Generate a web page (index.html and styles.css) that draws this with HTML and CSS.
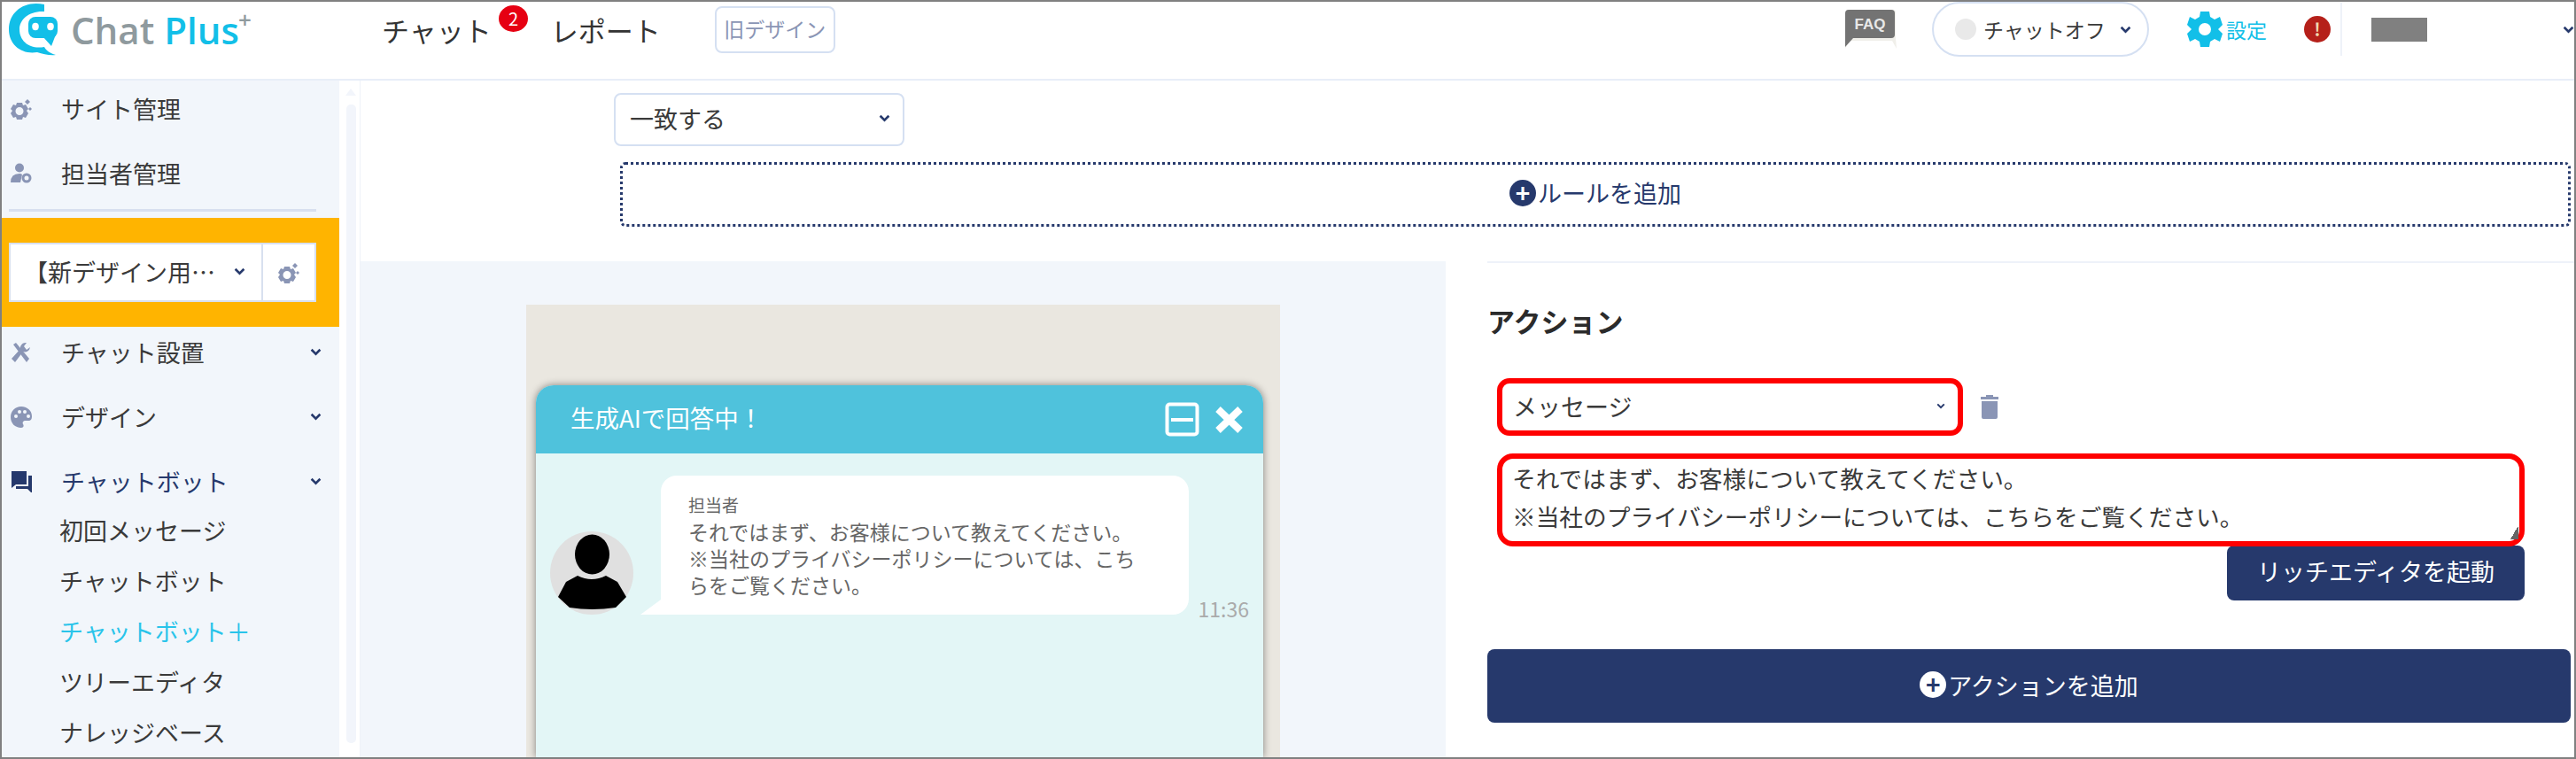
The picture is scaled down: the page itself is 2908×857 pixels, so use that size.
FILE: index.html
```html
<!DOCTYPE html>
<html lang="ja">
<head>
    <meta charset="UTF-8">
    <title>Chat Plus</title>
    <link rel="stylesheet" href="styles.css">
</head>
<body>
<div class="frame">
    <header class="topbar">
        <a class="logo">
            <svg class="logo-mark" viewBox="10 4 56 60">
                <path fill="#12bfe8" d="M50 6 C28 1 10 14 10 34 C10 52 25 63 42 60 C49 62 56 64 63 63 C56 61 52 58 50 54 C34 57 22 48 22 34 C22 23 33 13 50 14 Z"/>
                <rect x="32" y="20" width="33" height="24" rx="8" fill="#12bfe8"/>
                <path d="M48 42 L58 53 L63 40 Z" fill="#12bfe8"/>
                <ellipse cx="40" cy="31" rx="3.8" ry="4.2" fill="#fff"/>
                <ellipse cx="57" cy="31" rx="3.8" ry="4.2" fill="#fff"/>
            </svg>
            <span class="logo-chat">Chat</span>
            <span class="logo-plus">Plus<sup>+</sup></span>
        </a>
        <nav class="topnav">
            <a class="topnav-item">チャット<span class="badge">2</span></a>
            <a class="topnav-item">レポート</a>
        </nav>
        <a class="old-design">旧デザイン</a>

        <div class="top-right">
            <svg class="faq" viewBox="0 0 58 44">
                <path d="M4 0 H54 Q57 0 57 3 V32 L58 44 L53 35 H5 L0 44 L1 32 V3 Q1 0 4 0 Z" fill="#f0efea"/>
                <path d="M4 0 H52 Q56 0 56 4 V28 Q56 32 52 32 H9 L0 42 V4 Q0 0 4 0 Z" fill="#737373"/>
                <text x="28" y="22" text-anchor="middle" class="faq-text">FAQ</text>
            </svg>
            <div class="status-pill">
                <span class="status-dot"></span>
                <span>チャットオフ</span>
                <svg class="chev" viewBox="0 0 12 8"><path d="M1.5 1.5 L6 6 L10.5 1.5" /></svg>
            </div>
            <a class="settings">
                <svg class="settings-gear" viewBox="0 0 40 40">
                    <path fill="#12bfe8" fill-rule="evenodd" d="M15 0 H25 L26 6 L31 9 L37 6 L40 15 L35 20 L40 25 L37 34 L31 31 L26 34 L25 40 H15 L14 34 L9 31 L3 34 L0 25 L5 20 L0 15 L3 6 L9 9 L14 6 Z M20 13 A7 7 0 1 0 20 27 A7 7 0 1 0 20 13 Z"/>
                </svg>
                <span>設定</span>
            </a>
            <span class="alert">!</span>
            <span class="top-divider"></span>
            <span class="user-block"></span>
            <svg class="chev user-chev" viewBox="0 0 12 8"><path d="M1.5 1.5 L6 6 L10.5 1.5" /></svg>
        </div>
    </header>

    <div class="main">
        <aside class="sidebar">
            <a class="side-item">
                <svg class="side-icon" viewBox="0 0 24 24"><use href="#gears"/></svg>
                <span>サイト管理</span>
            </a>
            <a class="side-item side-item-second">
                <svg class="side-icon" viewBox="0 0 24 24">
                    <circle cx="10" cy="5.5" r="5" fill="#8a95b5"/>
                    <path d="M0 22 Q0 12 10 12 Q12 12 13 13 L11 22 Z" fill="#8a95b5"/>
                    <circle cx="18" cy="17" r="4" fill="none" stroke="#8a95b5" stroke-width="3"/>
                </svg>
                <span>担当者管理</span>
            </a>
            <div class="side-divider"></div>
            <div class="site-box">
                <div class="site-select">
                    <span class="site-name">【新デザイン用…</span>
                    <svg class="chev" viewBox="0 0 12 8"><path d="M1.5 1.5 L6 6 L10.5 1.5" /></svg>
                </div>
                <div class="site-gear">
                    <svg class="side-icon" viewBox="0 0 24 24"><use href="#gears"/></svg>
                </div>
            </div>
            <a class="side-item side-group">
                <svg class="side-icon" viewBox="0 0 24 24">
                    <path d="M3 3 L6 1 L21 19 L18 23 Z" fill="#8a95b5"/>
                    <path d="M22 6 A6 6 0 0 1 14 11 L5 23 L1 19 L11 8 A6 6 0 0 1 18 1 L15 5 L18 9 Z" fill="#8a95b5"/>
                </svg>
                <span>チャット設置</span>
                <svg class="chev side-chev" viewBox="0 0 12 8"><path d="M1.5 1.5 L6 6 L10.5 1.5" /></svg>
            </a>
            <a class="side-item side-group">
                <svg class="side-icon" viewBox="0 0 24 24">
                    <path fill="#8a95b5" d="M12 0 C5 0 0 5 0 12 C0 19 5 24 12 24 C15 24 15 21 14 20 C13 18 14 16 17 16 H20 C23 16 24 14 24 11 C24 4 18 0 12 0 Z"/>
                    <circle cx="6" cy="11" r="2" fill="#f2f6fb"/>
                    <circle cx="10" cy="6" r="2" fill="#f2f6fb"/>
                    <circle cx="16" cy="6" r="2" fill="#f2f6fb"/>
                    <circle cx="20" cy="11" r="2" fill="#f2f6fb"/>
                </svg>
                <span>デザイン</span>
                <svg class="chev side-chev" viewBox="0 0 12 8"><path d="M1.5 1.5 L6 6 L10.5 1.5" /></svg>
            </a>
            <a class="side-item side-group side-open">
                <svg class="side-icon" viewBox="0 0 24 24">
                    <path fill="#26396c" d="M1 0 H18 V15 H6 L1 19 Z"/>
                    <path fill="#26396c" d="M20 5 H24 V25 L19 20 H6 V17 H20 Z"/>
                </svg>
                <span>チャットボット</span>
                <svg class="chev side-chev" viewBox="0 0 12 8"><path d="M1.5 1.5 L6 6 L10.5 1.5" /></svg>
            </a>
            <a class="side-sub">初回メッセージ</a>
            <a class="side-sub">チャットボット</a>
            <a class="side-sub side-sub-active">チャットボット＋</a>
            <a class="side-sub">ツリーエディタ</a>
            <a class="side-sub">ナレッジベース</a>
        </aside>
        <div class="side-scroll">
            <span class="scroll-arrow"></span>
            <span class="scroll-thumb"></span>
        </div>

        <main class="content">
            <section class="rule-area">
                <div class="field match-select">
                    <span>一致する</span>
                    <svg class="chev" viewBox="0 0 12 8"><path d="M1.5 1.5 L6 6 L10.5 1.5" /></svg>
                </div>
                <a class="add-rule">
                    <span class="plus plus-navy">+</span>ルールを追加
                </a>
            </section>

            <section class="bottom-area">
                <div class="preview">
                    <div class="preview-bg">
                        <div class="widget">
                            <div class="widget-head">
                                <span class="widget-title">生成AIで回答中！</span>
                                <svg class="widget-min" viewBox="0 0 39 39">
                                    <rect x="2.5" y="2.5" width="34" height="34" rx="3" fill="none" stroke="#fff" stroke-width="4"/>
                                    <rect x="7" y="18" width="25" height="4" fill="#fff"/>
                                </svg>
                                <svg class="widget-close" viewBox="0 0 33 32">
                                    <path d="M4 4 L29 28 M29 4 L4 28" stroke="#fff" stroke-width="8" fill="none"/>
                                </svg>
                            </div>
                            <div class="widget-body">
                                <div class="msg">
                                    <svg class="avatar" viewBox="0 0 94 94">
                                        <circle cx="47" cy="47" r="47" fill="#e0e0e0"/>
                                        <ellipse cx="47.5" cy="26" rx="19.5" ry="22.5" fill="#000"/>
                                        <path d="M31 50 Q47 58 63 50 L76 57 L86 74 L74 86 Q47 90 22 86 L9 74 L18 57 Z" fill="#000"/>
                                    </svg>
                                    <div class="bubble">
                                        <div class="bubble-name">担当者</div>
                                        <div class="bubble-text">それではまず、お客様について教えてください。<br>※当社のプライバシーポリシーについては、こち<br>らをご覧ください。</div>
                                    </div>
                                    <span class="msg-time">11:36</span>
                                </div>
                            </div>
                        </div>
                    </div>
                </div>

                <div class="action-panel">
                    <div class="action-inner">
                        <h2 class="action-title">アクション</h2>
                        <div class="action-row">
                            <div class="field type-select">
                                <span>メッセージ</span>
                                <svg class="chev chev-small" viewBox="0 0 12 8"><path d="M1.5 1.5 L6 6 L10.5 1.5" /></svg>
                            </div>
                            <svg class="trash" viewBox="0 0 20 27">
                                <path d="M6 0 H14 V2 H20 V5 H0 V2 H6 Z M1 7 H19 V25 Q19 27 17 27 H3 Q1 27 1 25 Z" fill="#8a95b5"/>
                            </svg>
                        </div>
                        <div class="message-box">それではまず、お客様について教えてください。<br>※当社のプライバシーポリシーについては、こちらをご覧ください。</div>
                        <div class="editor-row">
                            <a class="btn-editor">リッチエディタを起動</a>
                        </div>
                        <a class="btn-add-action"><span class="plus plus-white">+</span>アクションを追加</a>
                    </div>
                </div>
            </section>
        </main>
    </div>
</div>

<svg class="defs" width="0" height="0">
    <defs>
        <g id="gears" fill="#8a95b5">
            <path fill-rule="evenodd" d="M7 5 H13 L14 8 L17 7 L20 12 L18 14 L20 17 L17 22 L14 21 L13 24 H7 L6 21 L3 22 L0 17 L2 14 L0 12 L3 7 L6 8 Z M10 10 A4.5 4.5 0 1 0 10 19 A4.5 4.5 0 1 0 10 10 Z"/>
            <path d="M19 1 L22 4 L19 7 L16 4 Z"/>
            <path d="M22 10 L24 12 L22 14 L20 12 Z"/>
        </g>
    </defs>
</svg>
</body>
</html>
```

FILE: styles.css
```css
* {
    box-sizing: border-box;
}
html, body {
    margin: 0;
    height: 100%;
    overflow: hidden;
}
body {
    font-family: "Noto Sans CJK JP", "Noto Sans", sans-serif;
    color: #3a3a3a;
    background: #fff;
}
a {
    color: inherit;
    text-decoration: none;
}
svg {
    display: block;
    flex: none;
}
.defs {
    position: absolute;
}

.frame {
    width: 2908px;
    height: 857px;
    border: 2px solid #808080;
    display: flex;
    flex-direction: column;
    overflow: hidden;
}

/* chevrons */
.chev {
    width: 13px;
    height: 9px;
    fill: none;
    stroke: #26396c;
    stroke-width: 2.4;
}
.chev-small {
    width: 10px;
    height: 7px;
}

/* top bar */
.topbar {
    flex: none;
    height: 89px;
    padding: 0 0 25px 8px;
    display: flex;
    align-items: center;
    border-bottom: 2px solid #e8eef8;
}
.logo {
    width: 421px;
    display: flex;
    align-items: center;
    font-family: "Open Sans", sans-serif;
    font-weight: 600;
    font-size: 42px;
    white-space: nowrap;
}
.logo-mark {
    width: 56px;
    height: 60px;
    margin-right: 14px;
}
.logo-chat {
    color: #8f9a9e;
    margin-right: 11px;
}
.logo-plus {
    color: #12bfe8;
}
.logo-plus sup {
    margin-left: -1px;
    color: #8f9a9e;
    font-size: 26px;
    line-height: 0;
    vertical-align: 18px;
}
.topnav {
    display: flex;
    gap: 67px;
    font-size: 31px;
}
.topnav-item {
    position: relative;
    color: #333;
}
.badge {
    position: absolute;
    left: 132px;
    top: -5px;
    width: 33px;
    height: 30px;
    border-radius: 50%;
    background: #e60012;
    color: #fff;
    font-size: 20px;
    line-height: 30px;
    text-align: center;
}
.old-design {
    margin-left: 61px;
    width: 136px;
    height: 53px;
    border: 2px solid #d5e0f2;
    border-radius: 8px;
    color: #8a95b5;
    font-size: 23px;
    line-height: 47px;
    text-align: center;
}
.top-right {
    margin-left: auto;
    display: flex;
    align-items: center;
}
.faq {
    width: 58px;
    height: 44px;
    margin-right: 40px;
}
.faq-text {
    font-family: "Liberation Sans", sans-serif;
    font-size: 17px;
    font-weight: bold;
    fill: #e8e8e8;
}
.status-pill {
    width: 245px;
    height: 62px;
    padding: 0 20px 0 24px;
    display: flex;
    align-items: center;
    gap: 8px;
    border: 2px solid #d5e0f2;
    border-radius: 31px;
    font-size: 23px;
    white-space: nowrap;
}
.status-pill .chev {
    margin-left: 8px;
}
.status-dot {
    flex: none;
    width: 24px;
    height: 24px;
    border-radius: 50%;
    background: #e9e9e9;
}
.settings {
    margin-left: 43px;
    display: flex;
    align-items: center;
    gap: 4px;
    color: #12bfe8;
    font-size: 23px;
}
.settings-gear {
    width: 40px;
    height: 40px;
}
.alert {
    margin-left: 42px;
    width: 30px;
    height: 30px;
    border-radius: 50%;
    background: #b5201a;
    color: #f0d8b0;
    font-size: 20px;
    font-weight: bold;
    line-height: 30px;
    text-align: center;
}
.top-divider {
    margin-left: 11px;
    width: 2px;
    height: 60px;
    background: #eef2f9;
}
.user-block {
    margin-left: 33px;
    width: 63px;
    height: 27px;
    background: #808080;
}
.user-chev {
    margin-left: 153px;
}

/* main layout */
.main {
    flex: 1;
    min-height: 0;
    display: flex;
}
.sidebar {
    flex: none;
    width: 381px;
    background: #f2f6fb;
    display: flex;
    flex-direction: column;
    overflow: hidden;
}
.side-item {
    flex: none;
    height: 66px;
    padding: 0 20px 3px 10px;
    display: flex;
    align-items: center;
    font-size: 27px;
    color: #3a3a3a;
    white-space: nowrap;
}
.side-item-second {
    margin-top: 7px;
}
.side-icon {
    width: 24px;
    height: 24px;
    margin-right: 33px;
}
.side-divider {
    flex: none;
    margin: 6px 26px 0 8px;
    height: 3px;
    background: #d8e0ef;
}
.site-box {
    flex: none;
    margin-top: 7px;
    height: 123px;
    padding: 28px 26px 28px 8px;
    background: #ffb400;
    display: flex;
}
.site-select {
    flex: 1;
    padding: 0 0 3px 15px;
    display: flex;
    align-items: center;
    background: #fff;
    border: 2px solid #d8e0ef;
    font-size: 27px;
    white-space: nowrap;
}
.site-name {
    width: 225px;
    overflow: hidden;
}
.site-select .chev {
    margin-left: 12px;
}
.site-gear {
    flex: none;
    width: 60px;
    display: flex;
    align-items: center;
    justify-content: center;
    background: #fff;
    border: 2px solid #d8e0ef;
    border-left: 0;
}
.site-gear .side-icon {
    margin: 0;
}
.side-group {
    height: 54px;
    margin-top: 19px;
}
.site-box + .side-group {
    margin-top: 3px;
}
.side-chev {
    margin-left: auto;
}
.side-open {
    color: #26396c;
}
.side-sub {
    flex: none;
    height: 57px;
    padding-left: 65px;
    font-size: 27px;
    line-height: 54px;
    color: #3a3a3a;
}
.side-sub-active {
    color: #29c4ea;
}
.side-scroll {
    flex: none;
    width: 24px;
    padding: 9px 5px 0 8px;
    border-right: 1px solid #eef2f9;
    display: flex;
    flex-direction: column;
    align-items: center;
}
.scroll-arrow {
    width: 0;
    height: 0;
    border-left: 6px solid transparent;
    border-right: 6px solid transparent;
    border-bottom: 8px solid #f2f5fb;
}
.scroll-thumb {
    margin-top: 10px;
    width: 11px;
    height: 721px;
    background: #f2f5fb;
    border-radius: 5px;
}

/* content */
.content {
    flex: 1;
    min-width: 0;
    display: flex;
    flex-direction: column;
}
.rule-area {
    flex: none;
    height: 204px;
    padding: 14px 4px 0 286px;
}
.field {
    display: flex;
    align-items: center;
    justify-content: space-between;
    background: #fff;
    font-size: 27px;
}
.match-select {
    width: 328px;
    height: 60px;
    padding: 0 14px 3px 16px;
    border: 2px solid #d5e0f2;
    border-radius: 8px;
}
.add-rule {
    margin: 18px 0 0 7px;
    height: 73px;
    padding-bottom: 4px;
    display: flex;
    align-items: center;
    justify-content: center;
    border: 3px dotted #26396c;
    border-radius: 6px;
    font-size: 27px;
    color: #26396c;
}
.plus {
    flex: none;
    width: 30px;
    height: 30px;
    margin-right: 2px;
    border-radius: 50%;
    font-size: 28px;
    font-weight: bold;
    line-height: 28px;
    text-align: center;
}
.plus-navy {
    background: #26396c;
    color: #fff;
}
.plus-white {
    background: #fff;
    color: #26396c;
}
.bottom-area {
    flex: 1;
    min-height: 0;
    display: flex;
}
.preview {
    flex: none;
    width: 1225px;
    padding: 49px 0 0 187px;
    background: #f2f6fb;
}
.preview-bg {
    width: 851px;
    height: 100%;
    padding: 91px 19px 0 11px;
    background: #eae7e0;
}
.widget {
    height: 100%;
    border-radius: 20px 20px 0 0;
    background: #e3f6f6;
    box-shadow: 0 0 8px rgba(0, 0, 0, 0.45);
}
.widget-head {
    height: 77px;
    padding: 0 22px 0 39px;
    display: flex;
    align-items: center;
    background: #4fc2dc;
    border-radius: 20px 20px 0 0;
    color: #fff;
}
.widget-title {
    padding-bottom: 5px;
    font-size: 27.5px;
    white-space: nowrap;
    margin-right: auto;
}
.widget-min {
    width: 39px;
    height: 39px;
    margin-right: 17px;
}
.widget-close {
    width: 33px;
    height: 32px;
}
.widget-body {
    padding: 25px 16px 0 16px;
}
.msg {
    display: flex;
    align-items: flex-end;
}
.avatar {
    width: 94px;
    height: 94px;
}
.bubble {
    position: relative;
    margin-left: 31px;
    width: 596px;
    height: 157px;
    padding: 18px 20px 0 31px;
    background: #fff;
    border-radius: 18px 18px 18px 0;
    color: #666;
}
.bubble::before {
    content: "";
    position: absolute;
    left: -23px;
    bottom: 0;
    border-bottom: 17px solid #fff;
    border-left: 23px solid transparent;
}
.bubble-name {
    font-size: 19px;
    line-height: 30px;
}
.bubble-text {
    font-size: 23px;
    line-height: 30px;
    white-space: nowrap;
}
.msg-time {
    margin-left: 11px;
    color: #aaa;
    font-size: 23px;
    line-height: 14px;
}

/* action panel */
.action-panel {
    flex: 1;
    min-width: 0;
    padding-left: 47px;
}
.action-inner {
    height: 100%;
    border-top: 2px solid #eef2f9;
}
.action-title {
    margin: 40px 0 0;
    font-size: 31px;
    line-height: 50px;
    color: #2b2b2b;
}
.action-row {
    margin: 40px 0 0 11px;
    display: flex;
    align-items: center;
    gap: 20px;
}
.type-select {
    width: 526px;
    height: 65px;
    padding: 0 14px 3px 12px;
    border: 6px solid #ff0000;
    border-radius: 14px;
}
.trash {
    width: 20px;
    height: 27px;
}
.message-box {
    position: relative;
    margin: 20px 0 0 11px;
    width: 1160px;
    height: 105px;
    padding: 0 0 0 11px;
    border: 6px solid #ff0000;
    border-radius: 18px;
    font-size: 26.7px;
    line-height: 43px;
    white-space: nowrap;
}
.message-box::after {
    content: "";
    position: absolute;
    right: 1px;
    bottom: 2px;
    width: 10px;
    height: 14px;
    background: linear-gradient(-60deg, #666 50%, transparent 50%);
}
.editor-row {
    margin: -1px 0 0 11px;
    width: 1160px;
    display: flex;
    justify-content: flex-end;
}
.btn-editor {
    width: 336px;
    height: 62px;
    border-radius: 8px;
    background: #26396c;
    color: #fff;
    font-size: 27px;
    line-height: 58px;
    text-align: center;
    white-space: nowrap;
}
.btn-add-action {
    margin-top: 55px;
    width: 1223px;
    height: 83px;
    padding-bottom: 3px;
    display: flex;
    align-items: center;
    justify-content: center;
    border-radius: 8px;
    background: #26396c;
    color: #fff;
    font-size: 27px;
}
```
